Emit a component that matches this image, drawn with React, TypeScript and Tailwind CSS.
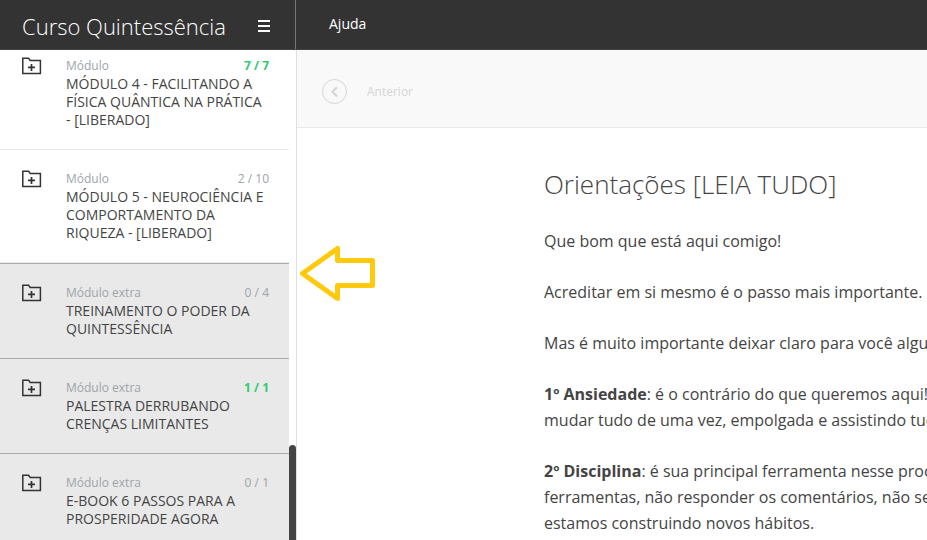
import clsx from "clsx"

type Module = {
  kind: string
  title: string
  done: number
  total: number
  extra?: boolean
}

const modules: Module[] = [
  {
    kind: "Módulo",
    title: "MÓDULO 4 - FACILITANDO A FÍSICA QUÂNTICA NA PRÁTICA - [LIBERADO]",
    done: 7,
    total: 7,
  },
  {
    kind: "Módulo",
    title: "MÓDULO 5 - NEUROCIÊNCIA E COMPORTAMENTO DA RIQUEZA - [LIBERADO]",
    done: 2,
    total: 10,
  },
  {
    kind: "Módulo extra",
    title: "TREINAMENTO O PODER DA QUINTESSÊNCIA",
    done: 0,
    total: 4,
    extra: true,
  },
  {
    kind: "Módulo extra",
    title: "PALESTRA DERRUBANDO CRENÇAS LIMITANTES",
    done: 1,
    total: 1,
    extra: true,
  },
  {
    kind: "Módulo extra",
    title: "E-BOOK 6 PASSOS PARA A PROSPERIDADE AGORA",
    done: 0,
    total: 1,
    extra: true,
  },
]

function FolderPlusIcon() {
  return (
    <svg
      width="20"
      height="18"
      viewBox="0 0 20 18"
      fill="none"
      stroke="#333333"
      aria-hidden="true"
    >
      <path d="M0.8 1.2H6.6L8.2 3.4H18.4V16.6H0.8Z" strokeWidth="1.5" />
      <path d="M6 10.4H13M9.5 6.9V13.9" strokeWidth="1.7" />
    </svg>
  )
}

function ModuleItem({ kind, title, done, total, extra }: Module) {
  return (
    <li
      className={clsx(
        extra
          ? "border-t border-[#a9adb0] bg-[#e9e9e9]"
          : "border-b border-[#ebebeb] bg-white",
      )}
    >
      <button
        type="button"
        className="flex w-full items-start pt-5 pb-5 pl-[22px] pr-5 text-left"
      >
        <span className="w-11 shrink-0">
          <FolderPlusIcon />
        </span>
        <span className="min-w-0 flex-1">
          <span className="flex justify-between text-[12px] leading-[18px] text-[#9ea4a9]">
            <span>{kind}</span>
            <span className={clsx(done === total && "font-bold text-[#2ecc71]")}>
              {done} / {total}
            </span>
          </span>
          <span className="block text-[14px] leading-[18px] text-[#444444]">
            {title}
          </span>
        </span>
      </button>
    </li>
  )
}

function Header() {
  return (
    <header className="flex h-[50px] shrink-0 border-b border-[#444444] bg-[#333333] text-white">
      <div className="flex w-[296px] shrink-0 items-center justify-between border-r border-[#777777] pt-0.5 pl-[22px] pr-[25px]">
        <h1 className="text-[22px] leading-8 font-light">Curso Quintessência</h1>
        <button type="button" aria-label="Menu">
          <svg width="12" height="12" viewBox="0 0 12 12" fill="white">
            <path d="M0 0H12V2H0ZM0 5H12V7H0ZM0 10H12V12H0Z" />
          </svg>
        </button>
      </div>
      <nav className="flex items-center pb-0.5 pl-[33px]">
        <a href="#ajuda" className="text-[14px]">
          Ajuda
        </a>
      </nav>
    </header>
  )
}

function Sidebar() {
  return (
    <aside className="flex w-[297px] shrink-0 overflow-hidden border-r border-[#dddfe1]">
      <ul className="-mt-[13px] flex-1">
        {modules.map((module) => (
          <ModuleItem key={module.title} {...module} />
        ))}
      </ul>
      <div className="flex w-[7px] flex-col justify-end">
        <div className="h-[95px] rounded-t-sm bg-[#444444]" />
      </div>
    </aside>
  )
}

function Lesson() {
  return (
    <main className="min-w-0 flex-1 overflow-hidden">
      <div className="flex h-[78px] items-center border-b border-[#e9eaeb] bg-[#f9f9f9] px-[25px] pt-[5px]">
        <button
          type="button"
          disabled
          className="flex items-center gap-5 text-[12px] text-[#d5d5d5]"
        >
          <svg width="25" height="25" viewBox="0 0 25 25" fill="none" stroke="currentColor">
            <circle cx="12.5" cy="12.5" r="12" />
            <path d="M15 8.2L10.4 12.8L15 17.4" strokeWidth="2.2" />
          </svg>
          <span className="pt-0.5">Anterior</span>
        </button>
      </div>
      <article className="pt-9 pl-[247px] text-[16px] leading-[26px] whitespace-nowrap text-[#444444]">
        <h2 className="mb-6 text-[26px] leading-10 font-light">
          Orientações [LEIA TUDO]
        </h2>
        <div className="flex flex-col gap-[25px]">
          <p>Que bom que está aqui comigo!</p>
          <p>Acreditar em si mesmo é o passo mais importante.</p>
          <p>Mas é muito importante deixar claro para você algu</p>
          <p>
            <strong>1º Ansiedade</strong>: é o contrário do que queremos aqui!
            <br />
            mudar tudo de uma vez, empolgada e assistindo tud
          </p>
          <p>
            <strong>2º Disciplina</strong>: é sua principal ferramenta nesse proc
            <br />
            ferramentas, não responder os comentários, não se
            <br />
            estamos construindo novos hábitos.
          </p>
        </div>
      </article>
    </main>
  )
}

export default function App() {
  return (
    <div className="relative flex h-screen flex-col overflow-hidden bg-white font-['Open_Sans',sans-serif]">
      <Header />
      <div className="flex min-h-0 flex-1">
        <Sidebar />
        <Lesson />
      </div>
      {/* Arrow pointing at the module list */}
      <svg
        className="pointer-events-none absolute top-[245px] left-[299px]"
        width="77"
        height="57"
        viewBox="0 0 77 57"
        fill="none"
        stroke="#ffc90e"
        strokeWidth="5"
        strokeLinejoin="round"
        aria-hidden="true"
      >
        <path d="M3.5 28.5L38.5 3.5V15.5H73.5V40.5H38.5V53.5Z" />
      </svg>
    </div>
  )
}
